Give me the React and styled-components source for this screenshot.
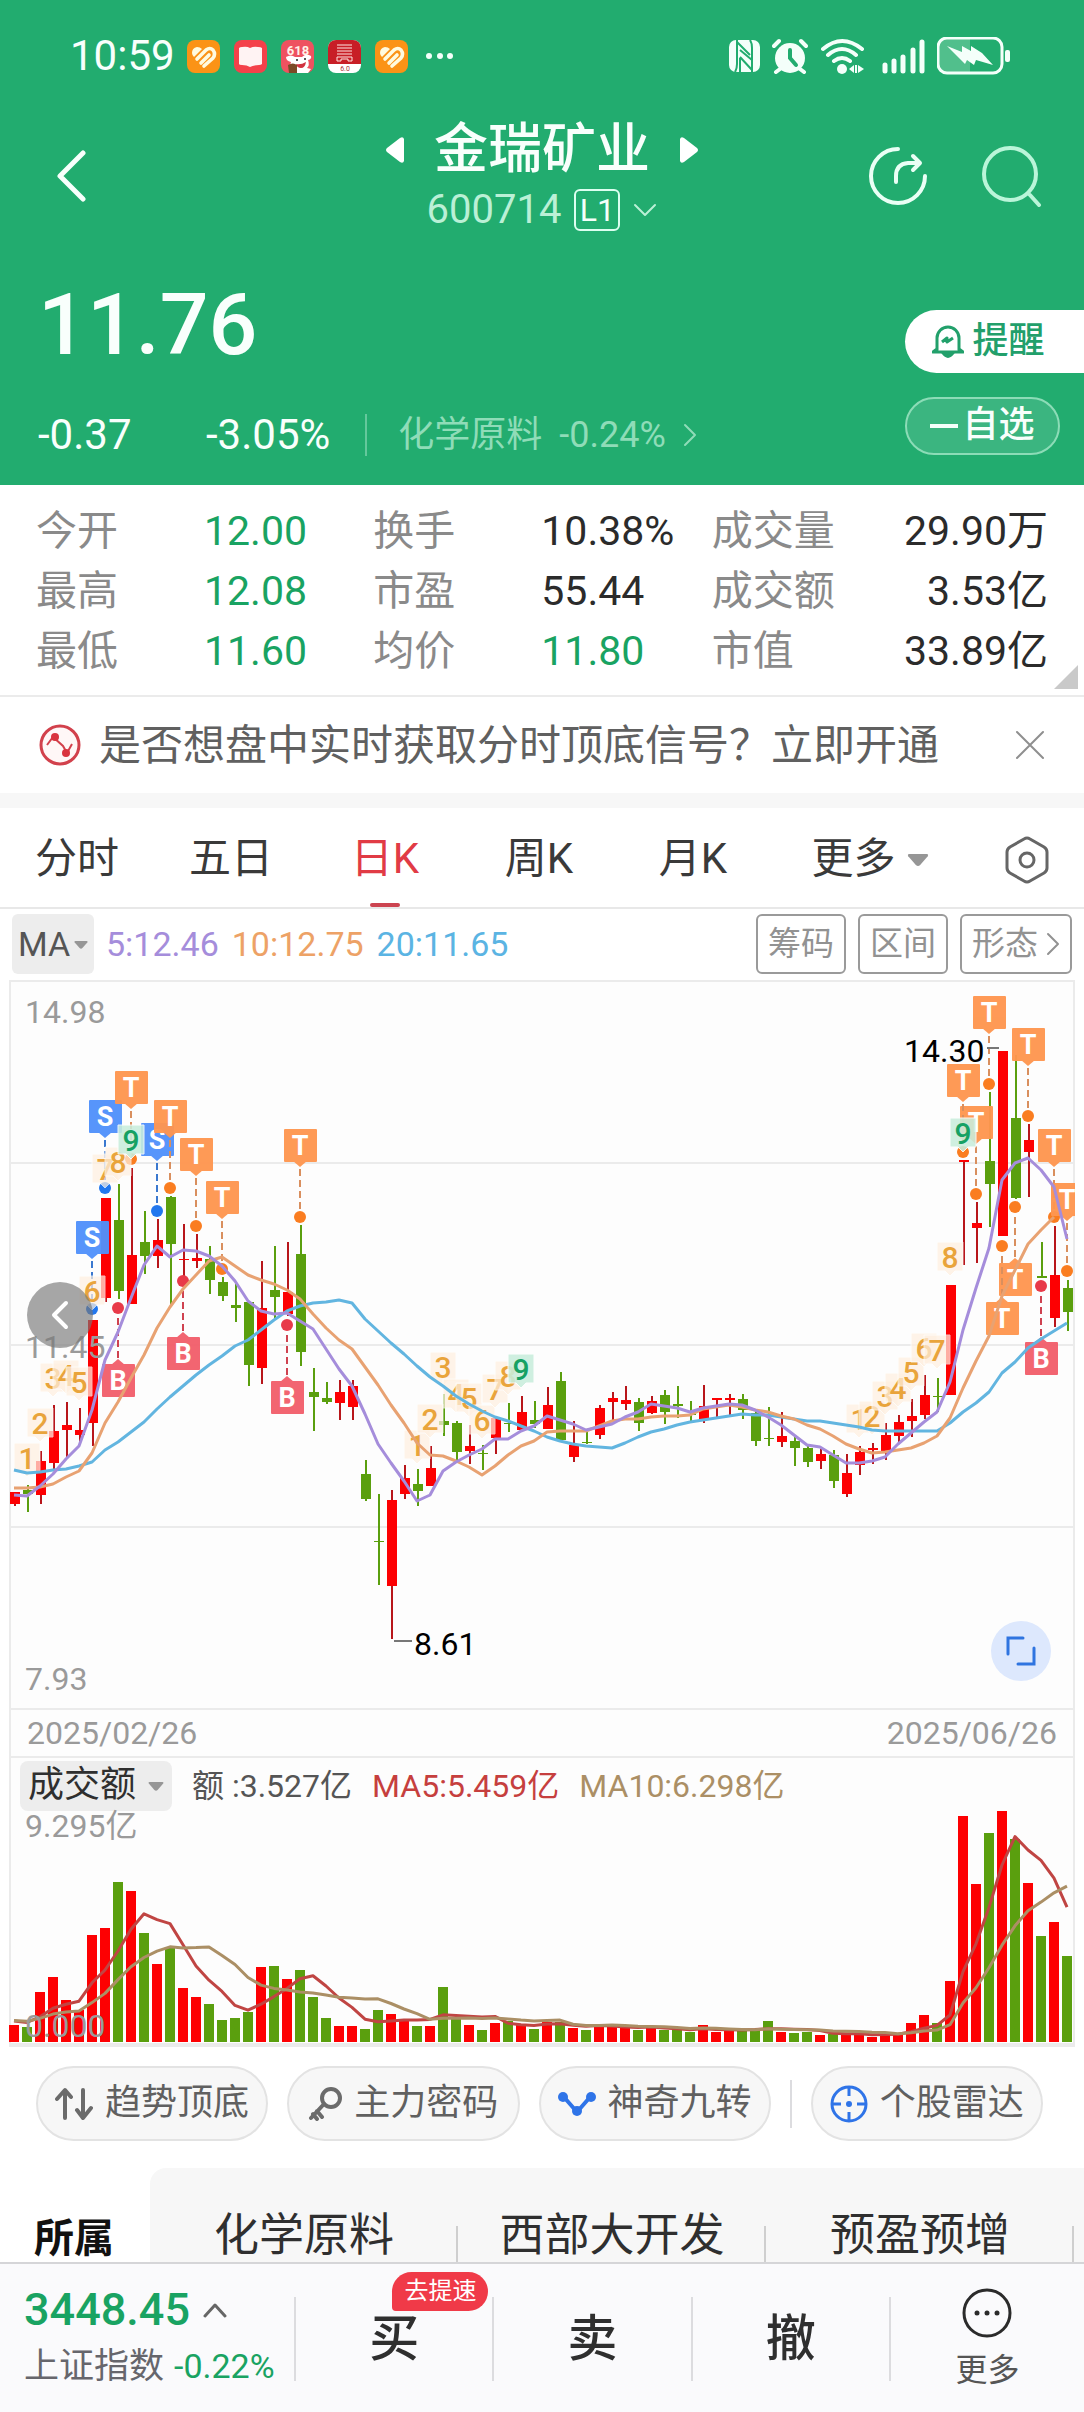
import React from 'react'
import styled, { createGlobalStyle } from 'styled-components'

const RED = '#fd0002'
const RED_WICK = '#b8161b'
const GREEN = '#5a9f0e'
const STEP = 13
const FIRST = 14

// [high, body top, body bottom, low, rising, volume]
const candles = [
  [512, 512, 524, 526, 1, 17],
  [505, 510, 514, 532, 0, 15],
  [471, 481, 515, 524, 1, 50],
  [425, 451, 483, 489, 1, 65],
  [422, 445, 450, 477, 1, 42],
  [428, 450, 455, 463, 1, 32],
  [340, 340, 443, 466, 1, 107],
  [218, 218, 318, 322, 1, 114],
  [204, 240, 311, 319, 0, 160],
  [188, 275, 324, 324, 1, 151],
  [231, 262, 276, 294, 0, 109],
  [239, 260, 276, 288, 1, 78],
  [216, 217, 264, 325, 0, 94],
  [244, 279, 280, 296, 1, 54],
  [254, 278, 281, 288, 1, 45],
  [266, 279, 300, 314, 0, 38],
  [297, 302, 316, 321, 0, 22],
  [304, 325, 328, 342, 0, 24],
  [322, 322, 385, 406, 0, 30],
  [281, 328, 388, 404, 1, 75],
  [266, 310, 317, 338, 0, 76],
  [262, 312, 334, 336, 1, 63],
  [245, 274, 372, 386, 0, 72],
  [388, 412, 417, 451, 0, 45],
  [402, 418, 422, 424, 0, 24],
  [400, 412, 423, 440, 1, 16],
  [400, 406, 427, 440, 1, 16],
  [480, 494, 519, 521, 0, 13],
  [514, 561, 562, 605, 0, 32],
  [510, 520, 606, 659, 1, 28],
  [485, 498, 514, 519, 1, 21],
  [489, 504, 511, 526, 0, 16],
  [466, 488, 506, 506, 1, 16],
  [414, 441, 445, 456, 0, 55],
  [441, 443, 472, 480, 0, 25],
  [445, 466, 471, 484, 1, 17],
  [465, 473, 474, 490, 0, 12],
  [436, 438, 458, 474, 1, 19],
  [423, 443, 444, 452, 0, 21],
  [416, 432, 450, 451, 1, 17],
  [421, 440, 444, 448, 0, 13],
  [407, 425, 449, 449, 1, 20],
  [392, 401, 460, 460, 0, 20],
  [441, 465, 477, 482, 1, 14],
  [452, 462, 463, 464, 0, 12],
  [425, 428, 455, 459, 1, 17],
  [412, 418, 422, 440, 1, 17],
  [406, 420, 424, 430, 1, 15],
  [418, 422, 443, 451, 0, 12],
  [416, 421, 433, 434, 1, 14],
  [410, 415, 432, 444, 0, 12],
  [406, 424, 426, 438, 0, 13],
  [421, 434, 435, 441, 0, 10],
  [405, 426, 440, 443, 1, 17],
  [418, 418, 420, 437, 1, 10],
  [414, 418, 420, 435, 1, 11],
  [414, 419, 430, 439, 0, 12],
  [430, 433, 461, 466, 0, 12],
  [427, 458, 459, 466, 0, 21],
  [432, 456, 462, 467, 1, 10],
  [457, 461, 468, 486, 0, 9],
  [466, 468, 482, 487, 0, 10],
  [469, 474, 481, 489, 1, 7],
  [470, 475, 501, 508, 0, 8],
  [474, 493, 514, 517, 1, 7],
  [466, 472, 485, 495, 1, 9],
  [463, 468, 470, 484, 1, 5],
  [443, 455, 471, 480, 1, 9],
  [435, 442, 456, 462, 1, 9],
  [419, 436, 441, 457, 1, 19],
  [395, 415, 435, 439, 1, 27],
  [398, 416, 417, 432, 0, 19],
  [305, 305, 415, 415, 1, 61],
  [180, 180, 182, 285, 1, 226],
  [222, 243, 248, 283, 1, 158],
  [112, 181, 204, 247, 0, 209],
  [71, 71, 256, 256, 1, 231],
  [75, 138, 218, 219, 0, 203],
  [144, 160, 172, 217, 1, 159],
  [262, 296, 298, 298, 0, 106],
  [246, 295, 338, 347, 1, 120],
  [300, 308, 332, 351, 0, 86],
]

const ma5 = [
  515, 516, 506, 494, 479, 466, 430, 380, 352, 318, 285, 266, 277, 270, 271,
  276, 286, 301, 321, 331, 334, 333, 341, 349, 369, 389, 406, 434, 464, 483,
  501, 521, 515, 491, 482, 475, 469, 459, 459, 451, 446, 436, 440, 444, 450,
  447, 444, 437, 432, 424, 426, 428, 432, 428, 426, 424, 425, 430, 437, 445,
  455, 465, 467, 475, 483, 483, 481, 477, 464, 453, 442, 432, 402, 350, 308,
  268, 200, 183, 178, 190, 207, 259,
]
const ma10 = [
  508, 508, 507, 504, 497, 491, 473, 443, 422, 398, 375, 348, 327, 309, 295,
  281, 277, 286, 295, 300, 304, 310, 319, 334, 348, 360, 369, 387, 405, 425,
  443, 463, 475, 476, 481, 487, 495, 486, 475, 466, 461, 452, 451, 451, 451,
  446, 441, 439, 439, 437, 436, 436, 435, 429, 427, 425, 427, 430, 432, 436,
  439, 445, 449, 456, 464, 469, 473, 472, 470, 468, 463, 456, 438, 408, 381,
  356, 316, 290, 264, 250, 237,
]
const ma20 = [
  490, 493, 492, 490, 489, 486, 482, 470, 462, 452, 442, 429, 417, 406, 395,
  385, 376, 366, 360, 350, 340, 331, 326, 323, 322, 320, 323, 339, 351, 363,
  374, 386, 397, 406, 416, 424, 431, 437, 441, 446, 451, 457, 461, 464, 466,
  467, 468, 463, 457, 452, 449, 445, 442, 440, 438, 436, 434, 435, 435, 437,
  439, 441, 441, 443, 445, 447, 450, 451, 451, 451, 451, 451, 443, 432, 423,
  412, 393, 382, 368, 359, 351, 343,
]

// [letter, bar, dot y, tag below the dot]
const tags = [
  ['S', 6, 329],
  ['S', 7, 208],
  ['S', 11, 231],
  ['T', 9, 179],
  ['T', 12, 208],
  ['T', 14, 246],
  ['T', 16, 289],
  ['T', 22, 237],
  ['B', 8, 328, true],
  ['B', 13, 301, true],
  ['B', 21, 345, true],
  ['T', 74, 214],
  ['T', 73, 172],
  ['T', 75, 104],
  ['T', 78, 136],
  ['T', 80, 237],
  ['T', 81, 291],
  ['T', 77, 227, true],
  ['T', 76, 266, true],
  ['B', 79, 306, true],
]

// [number, bar, top]
const counts = [
  [1, 1, 463], [2, 2, 428], [3, 3, 383], [4, 4, 380], [5, 5, 387],
  [6, 6, 296], [7, 7, 174], [8, 8, 167], [9, 9, 145],
  [1, 31, 450], [2, 32, 424], [3, 33, 372], [4, 34, 399], [5, 35, 403],
  [6, 36, 425], [7, 37, 394], [8, 38, 381], [9, 39, 374],
  [1, 65, 424], [2, 66, 421], [3, 67, 401], [4, 68, 393], [5, 69, 377],
  [6, 70, 353], [7, 71, 355], [8, 72, 262], [9, 73, 138],
]

const tagColors = {
  T: ['#ff9650', '#fa7d20', '#d98f5e'],
  S: ['#5191fb', '#2277ee', '#3a78cf'],
  B: ['#f25f6c', '#e83a49', '#cf4250'],
}

const barX = (i) => FIRST + i * STEP
const toPoints = (ys) => ys.map((y, i) => `${barX(i)},${y}`).join(' ')
const average = (values, span, seed) =>
  values.map((_, i) => {
    let sum = 0
    for (let k = 0; k < span; k++) {
      sum += i - k >= 0 ? values[i - k] : seed
    }
    return sum / span
  })

const Tag = ({ letter, bar, dot, below }) => {
  const [fill, dotFill, dash] = tagColors[letter]
  const x = barX(bar)
  const top = below ? dot + 56 : dot - 88
  const tip = below
    ? `${x - 7},${top + 1} ${x},${top - 5} ${x + 7},${top + 1}`
    : `${x - 7},${top + 32} ${x},${top + 38} ${x + 7},${top + 32}`
  return (
    <g>
      <line
        x1={x}
        x2={x}
        y1={below ? dot + 10 : top + 40}
        y2={below ? top - 6 : dot - 8}
        stroke={dash}
        strokeWidth='2'
        strokeDasharray='7 4'
      />
      <g opacity='0.96'>
        <rect x={x - 16} y={top} width='33' height='33' rx='1' fill={fill} />
        <polygon points={tip} fill={fill} />
      </g>
      <ChartText
        x={x}
        y={top + 26}
        textAnchor='middle'
        fontSize='27'
        fontWeight='700'
        fill='#fff'
      >
        {letter}
      </ChartText>
      <circle cx={x} cy={dot} r='6' fill={dotFill} />
    </g>
  )
}

const Count = ({ number, bar, top }) => {
  const x = barX(bar)
  const nine = number === 9
  return (
    <g>
      <path
        d={`M${x - 13} ${top}h26v29h-8l-5 5l-5 -5h-8z`}
        fill={nine ? '#c9eedd' : '#fff0e0'}
        opacity={nine ? 0.88 : 0.72}
        stroke='#fff'
        strokeWidth='1'
      />
      <ChartText
        x={x}
        y={top + 26}
        textAnchor='middle'
        fontSize='30'
        fontWeight='500'
        fill={nine ? '#16a163' : '#e9a43b'}
      >
        {number}
      </ChartText>
    </g>
  )
}

const PriceChart = () => (
  <ChartSvg viewBox='9 2 1066 726' role='img' aria-label='日K线'>
    {[183, 365, 547].map((y) => (
      <line key={y} x1='10' x2='1074' y1={y} y2={y} stroke='#ebebeb' strokeWidth='2' />
    ))}
    {candles.map(([high, top, bottom, low, up], i) => (
      <g key={i}>
        <rect
          x={barX(i)}
          y={high}
          width='2'
          height={low - high}
          fill={up ? RED_WICK : GREEN}
        />
        <rect
          x={barX(i) - 4}
          y={top}
          width='10'
          height={Math.max(bottom - top, 1)}
          fill={up ? RED : GREEN}
        />
      </g>
    ))}
    {tags.map(([letter, bar, dot, below]) => (
      <Tag key={letter + bar} letter={letter} bar={bar} dot={dot} below={below} />
    ))}
    {counts.map(([number, bar, top]) => (
      <Count key={bar} number={number} bar={bar} top={top} />
    ))}
    <g fill='#9a9a9a' fontSize='32'>
      <ChartText x='25' y='43'>14.98</ChartText>
      <ChartText x='25' y='378'>11.45</ChartText>
      <ChartText x='25' y='710'>7.93</ChartText>
    </g>
    <g fill='none' strokeWidth='3' strokeLinejoin='round'>
      <polyline points={toPoints(ma20)} stroke='#62b5e0' />
      <polyline points={toPoints(ma10)} stroke='#e8a272' />
      <polyline points={toPoints(ma5)} stroke='#a58ddb' />
    </g>
    <path d='M394 661h18M987 68h12' stroke='#777' strokeWidth='2' />
    <g fill='#000' fontSize='32'>
      <ChartText x='414' y='675'>8.61</ChartText>
      <ChartText x='904' y='82'>14.30</ChartText>
    </g>
  </ChartSvg>
)

const VolumeChart = () => {
  const base = 231
  const volumes = candles.map((c) => c[5])
  const line = (span) => toPoints(average(volumes, span, 22).map((v) => base - v))
  return (
    <ChartSvg viewBox='9 0 1066 232' role='img' aria-label='成交额' $open>
      {candles.map(([, , , , up, volume], i) => (
        <rect
          key={i}
          x={barX(i) - 5}
          y={base - volume}
          width='10'
          height={volume}
          fill={up ? RED : GREEN}
        />
      ))}
      <g fill='none' strokeWidth='3' strokeLinejoin='round'>
        <polyline points={line(5)} stroke='#c04543' />
        <polyline points={line(10)} stroke='#ab8f65' />
      </g>
      <g fill='#9a9a9a' fontSize='32'>
        <ChartText x='25' y='26'>9.295亿</ChartText>
        <ChartText x='25' y='226'>0.000</ChartText>
      </g>
    </ChartSvg>
  )
}

const HeartApp = () => (
  <svg width='33' height='33' viewBox='0 0 33 33' aria-hidden='true'>
    <rect width='33' height='33' rx='8' fill='#fb9316' />
    <path d='M5 13q0-5 5-6q3 0 5 2l-8 8q-2-2-2-4z' fill='#fffbe0' />
    <g fill='none' stroke='#fffbe0' strokeWidth='3.6' strokeLinecap='round'>
      <path d='M10 19l9-9q4-3 7 0q3 4 0 8l-9 8' />
      <path d='M14 23l8-8' />
    </g>
  </svg>
)

const BookApp = () => (
  <svg width='33' height='33' viewBox='0 0 33 33' aria-hidden='true'>
    <rect width='33' height='33' rx='8' fill='#f4414a' />
    <path d='M5 8q1-1 3-1q5-1 8 1q4-2 8-1q3 0 4 1v16q-1 1-3 1q-6 0-9 2q-3-2-8-2q-3 0-3-1z' fill='#fff3f3' />
  </svg>
)

const RabbitApp = () => (
  <svg width='33' height='33' viewBox='0 0 33 33' aria-hidden='true'>
    <rect width='33' height='33' rx='8' fill='#ee5260' />
    <text x='17' y='15' textAnchor='middle' fontSize='13' fontWeight='700' fill='#fff2e8'>618</text>
    <path d='M5 17q5-3 9 0h7q4-4 9-1q1 3-3 4q2 5-1 8l4 1l-3 4H10q-2-6 0-11q-5-1-5-5z' fill='#fff' />
    <path d='M15 24q5 1 10-2q-1 6-5 6q-4 0-5-4z' fill='#d1313f' />
    <circle cx='16' cy='20' r='1' fill='#222' />
    <circle cx='24' cy='19' r='1' fill='#222' />
    <path d='M7 25q5-3 9 0v8h-8z' fill='#7b4a26' />
  </svg>
)

const SealApp = () => (
  <svg width='33' height='33' viewBox='0 0 33 33' aria-hidden='true'>
    <rect width='33' height='33' rx='8' fill='#fff' />
    <path d='M0 24V8a8 8 0 0 1 8-8h17a8 8 0 0 1 8 8v16z' fill='#c81e26' />
    <path d='M9 5h15M9 8h15M9 11h15M9 14h15M9 21v-4h15v4h-4v-2h-7v2z' stroke='#ffe6e2' fill='none' />
    <text x='17' y='31' textAnchor='middle' fontSize='7' fill='#a33'>6.0</text>
  </svg>
)

const NfcIcon = () => (
  <svg width='31' height='32' viewBox='0 0 31 32' aria-hidden='true'>
    <rect width='31' height='32' rx='7' fill='#f4fffa' />
    <g stroke='#22ac6f' strokeWidth='2' fill='none'>
      <path d='M8 0v24q0 5-2 8M23 32V8q0-5-2-8' />
      <path d='M8 2l13 13M11 10l12 10M11 18v14M11 17l12 13' />
    </g>
  </svg>
)

const AlarmIcon = () => (
  <svg width='36' height='36' viewBox='0 0 36 36' aria-hidden='true'>
    <circle cx='18' cy='20' r='15' fill='#f4fffa' />
    <path d='M2 8l5-5M34 8l-5-5M8 31l-4 3M28 31l4 3' stroke='#f4fffa' strokeWidth='4' strokeLinecap='round' />
    <path d='M18 12v8l6 7' stroke='#22ac6f' strokeWidth='4' fill='none' strokeLinecap='round' />
  </svg>
)

const WifiIcon = () => (
  <svg width='50' height='36' viewBox='0 0 50 36' aria-hidden='true'>
    <g stroke='#f4fffa' strokeWidth='4' fill='none' strokeLinecap='round'>
      <path d='M3 11q19-16 39 0M8 17q14-12 28 0M14 23q8-6 16 0' />
    </g>
    <circle cx='22' cy='31' r='5' fill='#f4fffa' />
    <path d='M34 27v8l-5-4zM38 27v8l6-4z' fill='#f4fffa' />
    <path d='M36 27v8' stroke='#f4fffa' strokeWidth='2' />
  </svg>
)

const SignalIcon = () => (
  <svg width='43' height='36' viewBox='0 0 43 36' aria-hidden='true'>
    <path d='M3 27v6M12 23v10M21 19v14M31 12v21M40 4v29' stroke='#f4fffa' strokeWidth='5' strokeLinecap='round' />
  </svg>
)

const BatteryIcon = () => (
  <svg width='73' height='38' viewBox='0 0 73 38' aria-hidden='true'>
    <path d='M10 2h23v34H10a8 8 0 0 1-8-8V10a8 8 0 0 1 8-8z' fill='#51bf8c' />
    <rect x='1' y='1' width='64' height='35' rx='9' fill='none' stroke='#f4fffa' strokeWidth='3' />
    <rect x='68' y='13' width='5' height='12' rx='2' fill='#f4fffa' />
    <path d='M10 9l15 6V9l9 5V9l11 7l11 12l-17-5l-2 5l-7-5l-2 4z' fill='#f4fffa' />
  </svg>
)

const Chevron = ({ w, h, d, stroke = 3 }) => (
  <svg width={w} height={h} viewBox={`0 0 ${w} ${h}`} aria-hidden='true'>
    <path d={d} fill='none' stroke='currentColor' strokeWidth={stroke} strokeLinecap='round' strokeLinejoin='round' />
  </svg>
)

const Caret = ({ size = 20 }) => (
  <svg width={size} height={size / 2 + 2} viewBox='0 0 20 12' aria-hidden='true'>
    <path d='M2 1h16q2 0 1 2l-7 8q-2 2-4 0L1 3q-1-2 1-2z' fill='#969696' />
  </svg>
)

const ShareIcon = () => (
  <svg width='58' height='60' viewBox='0 0 58 60' fill='none' stroke='#eafff5' strokeWidth='4' strokeLinecap='round' aria-hidden='true'>
    <path d='M29 3A27 27 0 1 0 56 30' />
    <path d='M27 36v-6q0-12 12-13h11M44 10l7 7l-7 7' strokeLinejoin='round' />
  </svg>
)

const SearchIcon = () => (
  <svg width='60' height='62' viewBox='0 0 60 62' fill='none' stroke='#baf5d9' strokeWidth='4' strokeLinecap='round' aria-hidden='true'>
    <circle cx='28' cy='29' r='26' />
    <path d='M48 50l9 10' />
  </svg>
)

const BellIcon = () => (
  <svg width='32' height='35' viewBox='0 0 32 35' fill='none' stroke='#22a06b' strokeWidth='3' aria-hidden='true'>
    <path d='M5 26V14a11 11 0 0 1 22 0v12M1 28l4-3M31 28l-4-3M2 28h28' strokeLinecap='round' />
    <path d='M10 18l5-4v4l6-4' strokeLinejoin='round' />
    <path d='M11 29q5 7 10 0z' fill='#22a06b' />
  </svg>
)

const NoticeIcon = () => (
  <svg width='42' height='42' viewBox='0 0 42 42' aria-hidden='true'>
    <circle cx='21' cy='21' r='19' fill='#fff7f7' stroke='#d2414c' strokeWidth='3' />
    <path d='M8 21l6-8l10 9l4 7l5-9' fill='none' stroke='#d2414c' strokeWidth='2' />
    <circle cx='16' cy='13' r='4' fill='#d9343f' />
    <circle cx='27' cy='29' r='4' fill='#d9343f' />
  </svg>
)

const HexIcon = () => (
  <svg width='44' height='48' viewBox='0 0 44 48' fill='none' stroke='#666' strokeWidth='3' aria-hidden='true'>
    <path d='M19 3q3-2 6 0l14 8q3 2 3 5v16q0 3-3 5l-14 8q-3 2-6 0L5 37q-3-2-3-5V16q0-3 3-5z' />
    <circle cx='22' cy='24' r='7' />
  </svg>
)

const TrendIcon = () => (
  <svg width='38' height='34' viewBox='0 0 38 34' fill='none' stroke='#6b6b6b' strokeWidth='4' strokeLinecap='round' strokeLinejoin='round' aria-hidden='true'>
    <path d='M10 31V4M2 12l8-9l6 7M28 3v27M22 23l6 8l8-10' />
  </svg>
)

const KeyIcon = () => (
  <svg width='34' height='34' viewBox='0 0 34 34' fill='none' stroke='#6b6b6b' strokeWidth='4' strokeLinecap='round' aria-hidden='true'>
    <circle cx='23' cy='11' r='9' />
    <path d='M16 17L3 31M9 24l5 6M5 27l4 5' />
  </svg>
)

const NineIcon = () => (
  <svg width='38' height='26' viewBox='0 0 38 26' aria-hidden='true'>
    <path d='M5 5l14 16L33 5' fill='none' stroke='#2f74e8' strokeWidth='4' />
    <circle cx='5' cy='6' r='5' fill='#2f74e8' />
    <circle cx='33' cy='6' r='5' fill='#2f74e8' />
    <circle cx='19' cy='20' r='5' fill='#2f74e8' />
  </svg>
)

const RadarIcon = () => (
  <svg width='38' height='38' viewBox='0 0 38 38' fill='none' stroke='#2f74e8' strokeWidth='3' aria-hidden='true'>
    <circle cx='19' cy='19' r='17' />
    <path d='M19 2v9M19 27v9M2 19h9M27 19h9' />
    <circle cx='19' cy='19' r='3' fill='#2f74e8' stroke='none' />
  </svg>
)

const MoreIcon = () => (
  <svg width='50' height='50' viewBox='0 0 50 50' aria-hidden='true'>
    <circle cx='25' cy='25' r='23' fill='none' stroke='#2b2b2b' strokeWidth='3' />
    <circle cx='15' cy='25' r='2.5' fill='#2b2b2b' />
    <circle cx='25' cy='25' r='2.5' fill='#2b2b2b' />
    <circle cx='35' cy='25' r='2.5' fill='#2b2b2b' />
  </svg>
)

const stats = [
  { label: '今开', value: '12.00', green: true },
  { label: '换手', value: '10.38%' },
  { label: '成交量', value: '29.90万', end: true },
  { label: '最高', value: '12.08', green: true },
  { label: '市盈', value: '55.44' },
  { label: '成交额', value: '3.53亿', end: true },
  { label: '最低', value: '11.60', green: true },
  { label: '均价', value: '11.80', green: true },
  { label: '市值', value: '33.89亿', end: true },
]

const App = () => {
  return (
    <Page>
      <GlobalStyle />
      <Header>
        <StatusBar>
          <Clock>10:59</Clock>
          <AppIcons>
            <HeartApp />
            <BookApp />
            <RabbitApp />
            <SealApp />
            <HeartApp />
            <svg width='40' height='33' viewBox='0 0 40 33' fill='#f4fffa' aria-hidden='true'>
              <circle cx='7' cy='16' r='3' />
              <circle cx='18' cy='16' r='3' />
              <circle cx='28' cy='16' r='3' />
            </svg>
          </AppIcons>
          <SystemIcons>
            <NfcIcon />
            <AlarmIcon />
            <WifiIcon />
            <SignalIcon />
            <BatteryIcon />
          </SystemIcons>
        </StatusBar>
        <NavBar>
          <Back aria-label='返回'>
            <Chevron w={30} h={52} d='M26 3L3 26l23 23' stroke={5} />
          </Back>
          <Heading>
            <TitleRow>
              <button aria-label='上一只'>
                <svg width='18' height='28' viewBox='0 0 18 28' fill='#fff' aria-hidden='true'>
                  <path d='M18 3v22q-1 3-4 1L1 16q-2-2 0-4L14 2q3-2 4 1z' />
                </svg>
              </button>
              <h1>金瑞矿业</h1>
              <button aria-label='下一只'>
                <svg width='18' height='28' viewBox='0 0 18 28' fill='#fff' aria-hidden='true'>
                  <path d='M0 3v22q1 3 4 1l13-10q2-2 0-4L4 2q-3-2-4 1z' />
                </svg>
              </button>
            </TitleRow>
            <CodeRow>
              600714
              <Level>L1</Level>
              <Chevron w={24} h={14} d='M2 2l10 10L22 2' stroke={2} />
            </CodeRow>
          </Heading>
          <NavActions>
            <button aria-label='分享'>
              <ShareIcon />
            </button>
            <button aria-label='搜索'>
              <SearchIcon />
            </button>
          </NavActions>
        </NavBar>
        <Quote>
          <div>
            <Price>11.76</Price>
            <ChangeRow>
              <Change>-0.37</Change>
              <span>-3.05%</span>
              <Industry href='#industry'>
                化学原料
                <span>-0.24%</span>
                <Chevron w={14} h={24} d='M2 2l10 10L2 22' stroke={2} />
              </Industry>
            </ChangeRow>
          </div>
          <QuoteActions>
            <AlertButton>
              <BellIcon />
              提醒
            </AlertButton>
            <WatchButton>
              <svg width='28' height='4' viewBox='0 0 28 4' aria-hidden='true'>
                <rect width='28' height='4' fill='#f4fffa' />
              </svg>
              自选
            </WatchButton>
          </QuoteActions>
        </Quote>
      </Header>

      <Stats>
        {stats.map(({ label, value, green, end }) => (
          <Stat key={label} $end={end}>
            <dt>{label}</dt>
            <StatValue $green={green}>{value}</StatValue>
          </Stat>
        ))}
      </Stats>

      <Notice>
        <NoticeIcon />
        <p>是否想盘中实时获取分时顶底信号？立即开通</p>
        <button aria-label='关闭'>
          <Chevron w={30} h={30} d='M2 2l26 26M28 2L2 28' stroke={2} />
        </button>
      </Notice>

      <Periods>
        <Period>分时</Period>
        <Period>五日</Period>
        <Period $active>日K</Period>
        <Period>周K</Period>
        <Period>月K</Period>
        <Period $grow={200}>
          更多
          <Caret size={22} />
        </Period>
        <Period $grow={114} aria-label='设置'>
          <HexIcon />
        </Period>
      </Periods>

      <Indicators>
        <MaButton>
          MA
          <Caret size={14} />
        </MaButton>
        <Values>
          <Value $color='#a58ddb'>5:12.46</Value>
          <Value $color='#eda266'>10:12.75</Value>
          <Value $color='#5bb4e3'>20:11.65</Value>
        </Values>
        <Outline>筹码</Outline>
        <Outline>区间</Outline>
        <Outline>
          形态
          <Chevron w={14} h={24} d='M2 2l10 10L2 22' stroke={2} />
        </Outline>
      </Indicators>

      <Frame>
        <Plot>
          <PriceChart />
          <Previous aria-label='更早'>
            <Chevron w={20} h={30} d='M16 3L4 15l12 12' stroke={4} />
          </Previous>
          <Expand aria-label='全屏'>
            <svg width='30' height='30' viewBox='0 0 30 30' fill='none' stroke='#2f74e0' strokeWidth='3' strokeLinecap='round' aria-hidden='true'>
              <path d='M2 18V2h15M28 12v16H12' />
            </svg>
          </Expand>
        </Plot>
        <Dates>
          <time>2025/02/26</time>
          <time>2025/06/26</time>
        </Dates>
        <VolumeBar>
          <VolumeButton>
            成交额
            <Caret size={16} />
          </VolumeButton>
          <Value $color='#555'>额 :3.527亿</Value>
          <Value $color='#c63f3e'>MA5:5.459亿</Value>
          <Value $color='#ab8f65'>MA10:6.298亿</Value>
        </VolumeBar>
        <VolumeChart />
      </Frame>

      <Tools>
        <Tool>
          <TrendIcon />
          趋势顶底
        </Tool>
        <Tool>
          <KeyIcon />
          主力密码
        </Tool>
        <Tool>
          <NineIcon />
          神奇九转
        </Tool>
        <Rule $height={48} />
        <Tool>
          <RadarIcon />
          个股雷达
        </Tool>
      </Tools>

      <Sectors>
        <h2>所属</h2>
        <SectorList>
          <a href='#chemical'>化学原料</a>
          <a href='#west'>西部大开发</a>
          <a href='#growth'>预盈预增</a>
        </SectorList>
      </Sectors>

      <BottomBar>
        <Index>
          <IndexValue>
            3448.45
            <Chevron w={26} h={16} d='M3 14L13 3l10 11' />
          </IndexValue>
          <IndexName>
            上证指数
            <span>-0.22%</span>
          </IndexName>
        </Index>
        <Rule $height={84} />
        <Action>
          买
          <Badge>去提速</Badge>
        </Action>
        <Rule $height={84} />
        <Action>卖</Action>
        <Rule $height={84} />
        <Action>撤</Action>
        <Rule $height={84} />
        <More>
          <MoreIcon />
          更多
        </More>
      </BottomBar>
    </Page>
  )
}

const GlobalStyle = createGlobalStyle`
  * {
    box-sizing: border-box;
    margin: 0;
  }
  body {
    background: #fff;
    color: #2f2f2f;
    font-family: Roboto, 'Noto Sans CJK SC', sans-serif;
    line-height: 1.2;
  }
  button {
    display: flex;
    align-items: center;
    justify-content: center;
    padding: 0;
    border: 0;
    background: none;
    color: inherit;
    font: inherit;
    white-space: nowrap;
  }
  a {
    color: inherit;
    text-decoration: none;
  }
  svg {
    display: block;
    flex-shrink: 0;
  }
`

const Page = styled.main`
  display: flex;
  flex-direction: column;
  min-height: 100vh;
`

const Header = styled.header`
  background: #22ac6f;
  color: #f8fffc;
`

const StatusBar = styled.div`
  display: flex;
  align-items: center;
  height: 112px;
  padding: 0 74px 0 70px;
`

const Clock = styled.time`
  margin-right: 12px;
  font-size: 42px;
`

const AppIcons = styled.div`
  display: flex;
  gap: 14px;
  flex: 1;
`

const SystemIcons = styled.div`
  display: flex;
  align-items: center;
  gap: 12px;
`

const NavBar = styled.nav`
  display: grid;
  grid-template-columns: 1fr auto 1fr;
  align-items: center;
  height: 128px;
  padding: 0 42px;
`

const Back = styled.button`
  justify-self: start;
  padding-left: 15px;
`

const Heading = styled.div`
  padding-top: 8px;
`

const TitleRow = styled.div`
  display: flex;
  align-items: center;
  gap: 30px;
  line-height: 60px;

  h1 {
    font-size: 54px;
    font-weight: 500;
  }
`

const CodeRow = styled.div`
  display: flex;
  align-items: center;
  justify-content: center;
  gap: 13px;
  height: 60px;
  color: #baf0d6;
  font-size: 40px;
`

const Level = styled.span`
  width: 46px;
  height: 42px;
  border: 2px solid #dcfff0;
  border-radius: 6px;
  color: #f4fffa;
  font-size: 32px;
  line-height: 38px;
  text-align: center;
`

const NavActions = styled.div`
  display: flex;
  justify-content: flex-end;
  gap: 55px;
`

const Quote = styled.section`
  display: flex;
  justify-content: space-between;
  padding-left: 38px;
`

const Price = styled.p`
  margin-top: 41px;
  font-size: 86px;
  font-weight: 500;
  line-height: 88px;
`

const ChangeRow = styled.div`
  display: flex;
  align-items: center;
  height: 56px;
  margin: 38px 0 22px;
  font-size: 42px;
`

const Change = styled.span`
  width: 168px;
`

const Industry = styled.a`
  display: flex;
  align-items: center;
  gap: 17px;
  margin-left: 35px;
  padding-left: 31px;
  border-left: 2px solid #64c89c;
  color: #8fdcb8;
  font-size: 36px;
  line-height: 42px;
`

const QuoteActions = styled.div`
  display: flex;
  flex-direction: column;
  align-items: flex-start;
  gap: 24px;
  padding-top: 70px;
`

const AlertButton = styled.button`
  gap: 8px;
  width: 179px;
  height: 63px;
  padding-right: 12px;
  border-radius: 32px 0 0 32px;
  background: #fff;
  color: #229f6b;
  font-size: 36px;
  font-weight: 500;
`

const WatchButton = styled.button`
  gap: 4px;
  width: 155px;
  height: 58px;
  border: 2px solid #8cdcb7;
  border-radius: 29px;
  background: #3bb580;
  font-size: 36px;
  font-weight: 500;
`

const Stats = styled.dl`
  position: relative;
  display: grid;
  grid-template-columns: 336fr 337fr 335fr;
  grid-auto-rows: 60px;
  padding: 17px 36px 13px;
  border-bottom: 2px solid #ebebeb;
  font-size: 41px;

  &::after {
    content: '';
    position: absolute;
    right: 6px;
    bottom: 6px;
    border: 12px solid transparent;
    border-right-color: #c9c9c9;
    border-bottom-color: #c9c9c9;
  }
`

const Stat = styled.div`
  display: flex;
  align-items: center;
  justify-content: ${({ $end }) => ($end ? 'space-between' : 'flex-start')};

  dt {
    min-width: ${({ $end }) => ($end ? '0' : '168px')};
    color: #8a8a8a;
  }
`

const StatValue = styled.dd`
  color: ${({ $green }) => ($green ? '#19a362' : '#2b2b2b')};
`

const Notice = styled.section`
  display: flex;
  align-items: center;
  height: 111px;
  padding: 0 39px;
  border-bottom: 15px solid #f7f7f7;
  color: #8f8f8f;

  p {
    flex: 1;
    margin-left: 18px;
    padding-top: 2px;
    color: #606060;
    font-size: 42px;
    white-space: nowrap;
  }
`

const Periods = styled.nav`
  display: flex;
  height: 101px;
  border-bottom: 2px solid #e8e8e8;
`

const Period = styled.button`
  position: relative;
  flex: ${({ $grow }) => $grow || 154} 1 0;
  gap: 11px;
  padding-top: 4px;
  color: ${({ $active }) => ($active ? '#e13b45' : '#3a3a3a')};
  font-size: 42px;

  &::after {
    content: '';
    display: ${({ $active }) => ($active ? 'block' : 'none')};
    position: absolute;
    bottom: 0;
    width: 30px;
    height: 4px;
    border-radius: 2px;
    background: #cc4450;
  }
`

const Indicators = styled.div`
  display: flex;
  gap: 12px;
  height: 71px;
  padding: 5px 12px 6px;
`

const MaButton = styled.button`
  gap: 4px;
  width: 82px;
  border-radius: 6px;
  background: #ededed;
  color: #555;
  font-size: 34px;
`

const Values = styled.div`
  display: flex;
  align-items: center;
  flex: 1;
  gap: 13px;
  font-size: 34px;
`

const Value = styled.span`
  color: ${({ $color }) => $color};
  white-space: nowrap;
`

const Outline = styled.button`
  gap: 8px;
  padding: 0 10px;
  border: 2px solid #9a9a9a;
  border-radius: 6px;
  color: #929292;
  font-size: 33px;
`

const Frame = styled.section`
  margin: 0 9px;
  border: 2px solid #ebebeb;
  border-bottom-width: 4px;
  background: #fdfdfd;
`

const Plot = styled.div`
  position: relative;
`

const ChartSvg = styled.svg`
  width: calc(100% + 4px);
  margin: 0 -2px;
  overflow: ${({ $open }) => ($open ? 'visible' : 'hidden')};
`

const ChartText = styled.text`
  font-family: Roboto, 'Noto Sans CJK SC', sans-serif;
`

const Previous = styled.button`
  position: absolute;
  top: 300px;
  left: 16px;
  width: 66px;
  height: 66px;
  border-radius: 50%;
  background: rgba(120, 120, 120, 0.65);
  color: #fff;
`

const Expand = styled.button`
  position: absolute;
  right: 22px;
  bottom: 27px;
  width: 60px;
  height: 60px;
  border-radius: 50%;
  background: #dde8fd;
`

const Dates = styled.div`
  display: flex;
  align-items: center;
  justify-content: space-between;
  height: 48px;
  padding: 0 16px;
  border-top: 2px solid #ebebeb;
  color: #9a9a9a;
  font-size: 32px;
`

const VolumeBar = styled.div`
  display: flex;
  align-items: center;
  gap: 20px;
  height: 55px;
  padding: 3px 9px 0;
  border-top: 2px solid #ebebeb;
  font-size: 32px;
`

const VolumeButton = styled.button`
  gap: 12px;
  width: 152px;
  height: 50px;
  border-radius: 8px;
  background: #ededed;
  font-size: 36px;
`

const Tools = styled.div`
  display: flex;
  align-items: center;
  gap: 19px;
  padding: 19px 41px 27px 36px;
`

const Tool = styled.button`
  flex: 1;
  gap: 12px;
  height: 75px;
  border: 2px solid #e3e3e3;
  border-radius: 38px;
  background: #f7f7f7;
  color: #606060;
  font-size: 36px;
`

const Rule = styled.span`
  width: 2px;
  height: ${({ $height }) => $height}px;
  background: #dcdcdf;
`

const Sectors = styled.section`
  display: flex;
  flex: 1;

  h2 {
    width: 150px;
    padding: 48px 0 0 34px;
    color: #111;
    font-size: 40px;
    font-weight: 700;
    line-height: 46px;
  }
`

const SectorList = styled.div`
  display: flex;
  flex: 1;
  padding-right: 10px;
  border-top-left-radius: 16px;
  background: #f7f7f7;

  a {
    flex: 1;
    padding-top: 42px;
    background: linear-gradient(#cfcfcf, #cfcfcf) right bottom / 2px 36px no-repeat;
    font-size: 45px;
    line-height: 52px;
    text-align: center;
  }
`

const BottomBar = styled.footer`
  display: flex;
  align-items: center;
  height: 151px;
  border-top: 2px solid #d5d5d8;
  background: #fafafc;
`

const Index = styled.div`
  flex: 270 1 0;
  padding-left: 24px;
  white-space: nowrap;
`

const IndexValue = styled.p`
  display: flex;
  align-items: center;
  gap: 12px;
  color: #19a362;
  font-size: 45px;
  font-weight: 500;
  line-height: 56px;

  svg {
    color: #666;
  }
`

const IndexName = styled.p`
  color: #66666c;
  font-size: 35px;
  line-height: 56px;

  span {
    margin-left: 10px;
    color: #19a362;
    font-size: 34px;
  }
`

const Action = styled.button`
  position: relative;
  flex: 196 1 0;
  height: 100%;
  font-size: 50px;
  font-weight: 500;
`

const Badge = styled.span`
  position: absolute;
  top: 8px;
  right: 4px;
  width: 96px;
  border-radius: 20px 20px 20px 4px;
  background: #f03a48;
  color: #fff;
  font-size: 24px;
  font-weight: 400;
  line-height: 39px;
`

const More = styled.button`
  flex: 193 1 0;
  flex-direction: column;
  gap: 12px;
  color: #555;
  font-size: 32px;
  line-height: 40px;
`

export default App
